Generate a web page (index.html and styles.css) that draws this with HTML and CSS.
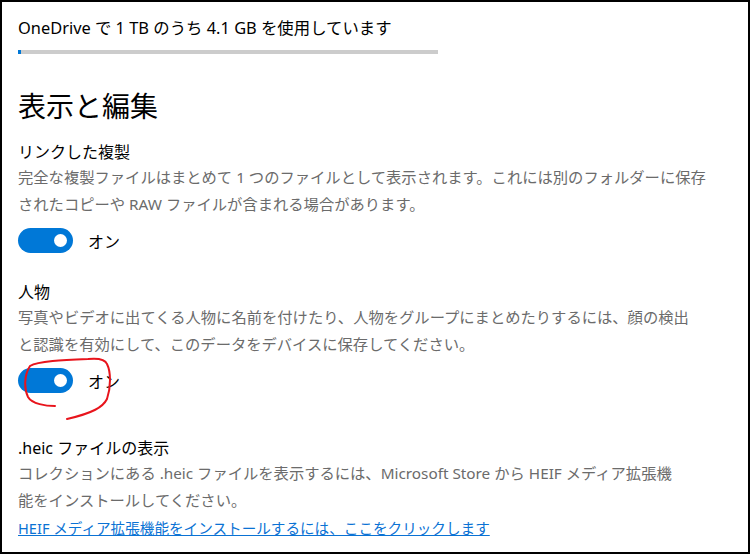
FILE: index.html
```html
<!DOCTYPE html>
<html lang="ja">

<head>
    <meta charset="UTF-8">
    <title>表示と編集</title>
    <link rel="stylesheet" href="styles.css">
</head>

<body>
    <div class="frame">
        <div class="storage">
            <p class="storage-text">OneDrive で 1 TB のうち 4.1 GB を使用しています</p>
            <div class="storage-bar"><div class="storage-used" style="width: 3px"></div></div>
        </div>

        <h2 class="section-title">表示と編集</h2>

        <div class="setting">
            <h3>リンクした複製</h3>
            <p class="desc">完全な複製ファイルはまとめて 1 つのファイルとして表示されます。これには別のフォルダーに保存されたコピーや RAW ファイルが含まれる場合があります。</p>
            <div class="toggle-row">
                <span class="toggle"><span class="knob"></span></span>
                <span class="toggle-label">オン</span>
            </div>
        </div>

        <div class="setting">
            <h3>人物</h3>
            <p class="desc people">写真やビデオに出てくる人物に名前を付けたり、人物をグループにまとめたりするには、顔の検出と認識を有効にして、このデータをデバイスに保存してください。</p>
            <div class="toggle-row">
                <span class="toggle"><span class="knob"></span></span>
                <span class="toggle-label">オン</span>
                <!-- hand drawn mark -->
                <svg class="scribble" width="100" height="70" viewBox="0 0 100 70">
                    <path d="M37 49 C28 49 14 47 10 40 C6 32 6 18 12 9 C20 4 45 3 70 2 C80 1 87 2 89 7 C93 15 93 30 89 42 C85 50 75 56 49 62" fill="none" stroke="#e8141c" stroke-width="2" stroke-linecap="round"/>
                </svg>
            </div>
        </div>

        <div class="setting last">
            <h3>.heic ファイルの表示</h3>
            <p class="desc narrow">コレクションにある .heic ファイルを表示するには、Microsoft Store から HEIF メディア拡張機能をインストールしてください。</p>
            <a class="link" href="#">HEIF メディア拡張機能をインストールするには、ここをクリックします</a>
        </div>
    </div>
</body>

</html>
```

FILE: styles.css
```css
:root {
    --text-color: #000000;
    --muted-color: #6b6b6b;
    --accent-color: #0078d7;
    --link-color: #0a72d4;
    --ui-font: "Noto Sans", "Noto Sans CJK JP", sans-serif;
}

body {
    margin: 0;
    font-family: var(--ui-font);
    color: var(--text-color);
    background: #fff;
}

.frame {
    box-sizing: border-box;
    width: 750px;
    height: 554px;
    border: 2px solid #000;
    padding: 15px 16px 0;
    overflow: hidden;
}

.storage-text {
    margin: 0;
    font-size: 16.4px;
    line-height: 22px;
}

.storage-bar {
    width: 420px;
    height: 4px;
    margin-top: 11px;
    background-color: #cccccc;
}

.storage-used {
    height: 100%;
    background-color: var(--accent-color);
}

.section-title {
    margin: 34px 0 0;
    font-size: 28px;
    font-weight: normal;
    line-height: 36px;
}

.setting {
    margin-top: 17px;
}

.setting h3 {
    margin: 0;
    font-size: 16px;
    font-weight: normal;
    line-height: 22px;
}

.desc {
    margin: 1px 0 0;
    width: 700px;
    font-size: 15.3px;
    line-height: 27px;
    color: var(--muted-color);
}

.desc.people {
    width: 680px;
}

.desc.narrow {
    width: 660px;
}

.toggle-row {
    position: relative;
    display: flex;
    align-items: center;
    gap: 15px;
    margin-top: 10px;
    height: 25px;
}

.toggle {
    position: relative;
    display: inline-block;
    width: 55px;
    height: 25px;
    border-radius: 13px;
    background-color: var(--accent-color);
}

.knob {
    position: absolute;
    top: 6px;
    right: 6px;
    width: 13px;
    height: 13px;
    border-radius: 50%;
    background: #fff;
}

.toggle-label {
    font-size: 16px;
}

.scribble {
    position: absolute;
    left: 0;
    top: -11px;
}

.setting + .setting {
    margin-top: 28px;
}

.setting.last {
    margin-top: 44px;
}

.link {
    display: inline-block;
    margin-top: 2px;
    font-size: 14.6px;
    line-height: 24px;
    color: var(--link-color);
    text-decoration: underline;
}
```
